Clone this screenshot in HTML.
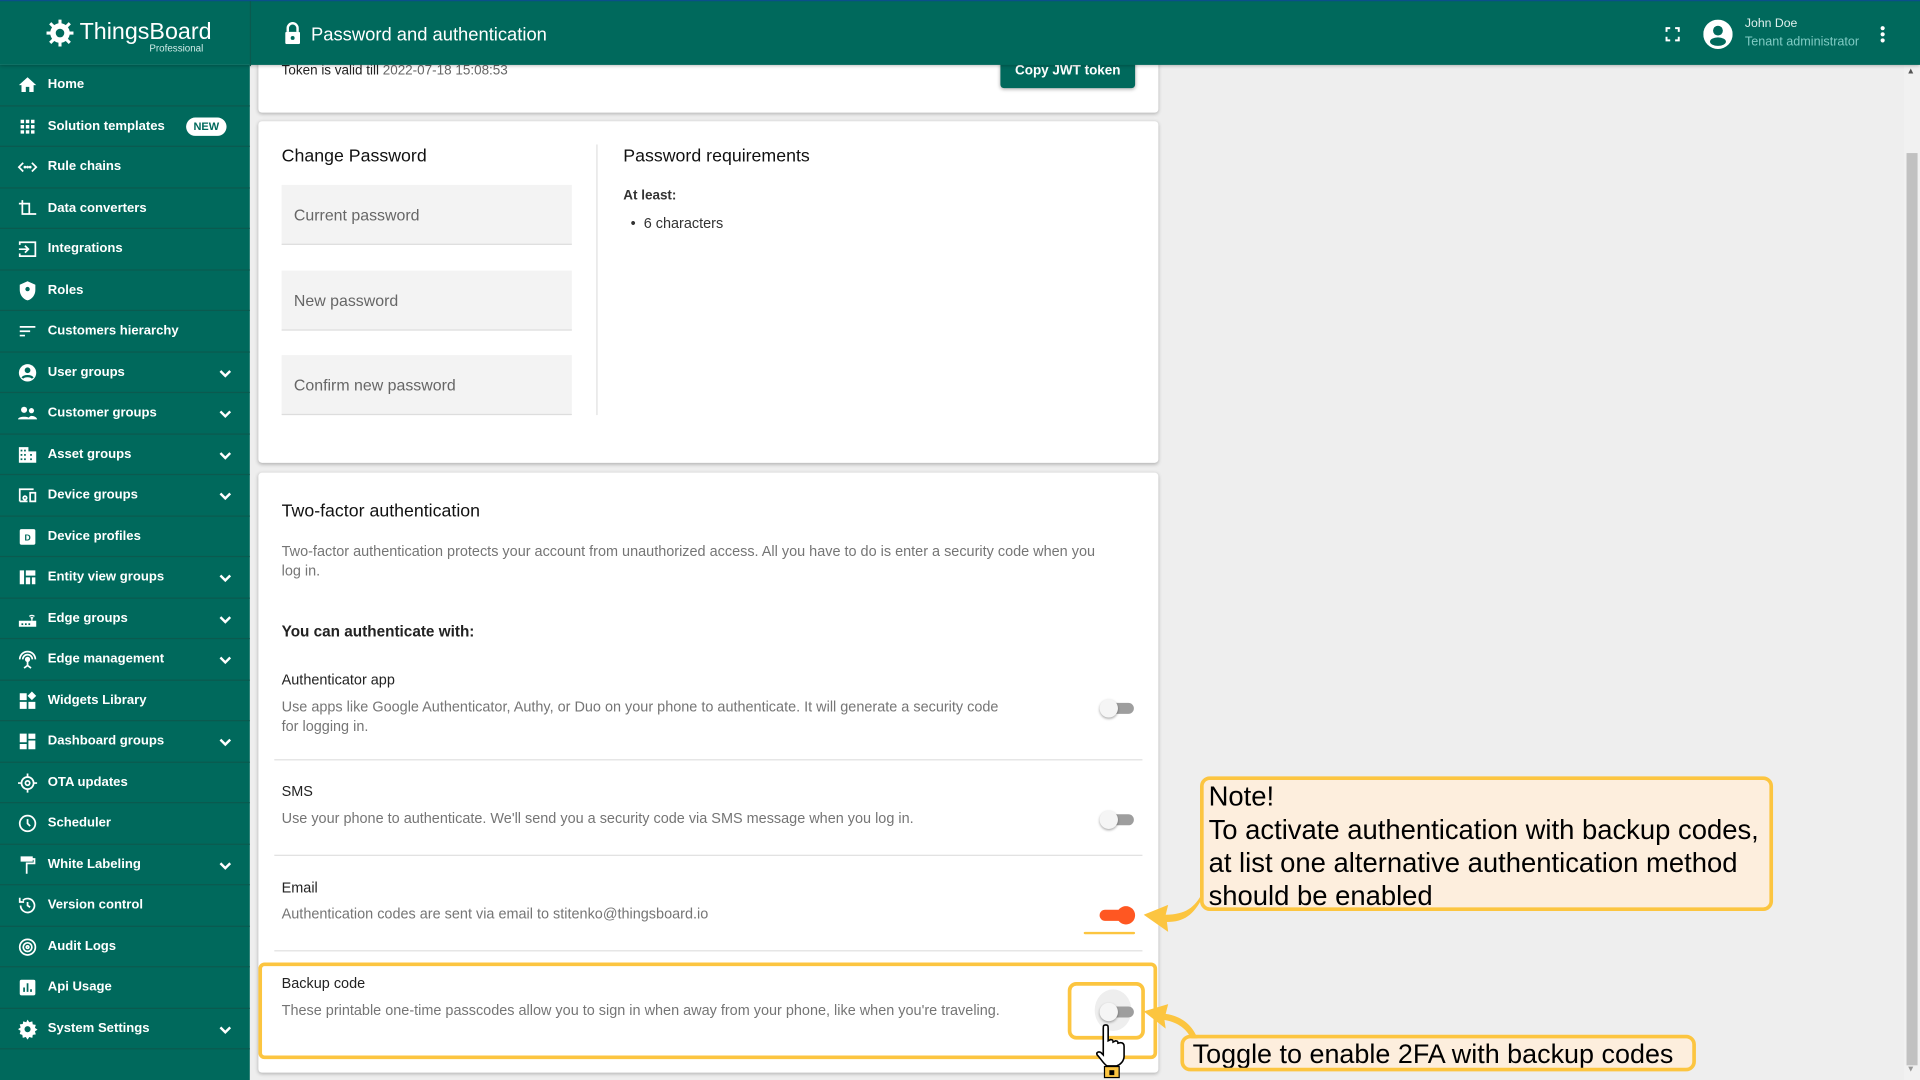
<!DOCTYPE html>
<html><head><meta charset="utf-8"><style>
*{box-sizing:border-box;margin:0;padding:0}
html,body{width:1920px;height:1080px;overflow:hidden;background:#eee;font-family:"Liberation Sans",Arial,sans-serif}
#w{position:absolute;left:0;top:0;width:1568px;height:882px;transform:scale(1.22449);transform-origin:0 0;background:#eee}
.abs{position:absolute}
#top{left:0;top:0;width:1568px;height:53px;background:#00695c;border-top:1px solid #0b4f8a;box-shadow:0 1px 3px rgba(0,0,0,.3);z-index:3}
#side{left:0;top:53px;width:204px;height:829px;background:#00695c}
.it{position:absolute;left:0;width:204px;height:33.5px;border-bottom:1px solid #0b5a4f;color:#fff;font-size:10.7px;font-weight:bold;line-height:33px;padding-left:39px}
.it svg.ic{position:absolute;left:14px;top:8px;width:17px;height:17px}
.it svg.chev{position:absolute;left:179px;top:14px;width:10px;height:7px}
.card{position:absolute;background:#fff;border-radius:3px;box-shadow:0 1px 3px rgba(0,0,0,.25)}
.fld{position:absolute;left:230px;width:237px;height:49px;background:#f3f3f3;border-bottom:1px solid #ddd;font-size:13px;color:#666;padding:17px 10px}
.t{position:absolute;white-space:nowrap}
.tg{position:absolute;width:28px;height:14px}
.tg .tr{position:absolute;left:6px;top:3px;width:22px;height:9px;border-radius:5px;background:#9e9e9e}
.tg .th{position:absolute;left:0;top:0;width:15px;height:15px;border-radius:50%;background:#f5f5f5;box-shadow:0 1px 2px rgba(0,0,0,.35)}
.note{position:absolute;background:#fdeedd;border:3px solid #fcc540;border-radius:8px;color:#000;line-height:27px;font-family:"Liberation Sans",sans-serif;white-space:nowrap;overflow:hidden}
.sep{position:absolute;left:224px;width:709px;height:1px;background:#e0e0e0}
.h{font-size:14.5px;color:#111}
.d{font-size:11.8px;color:#757575}
</style></head><body><div id="w">
<div id="top" class="abs">
 <svg class="abs" style="left:34px;top:11px" width="30" height="30" viewBox="0 0 30 30"><circle cx="15" cy="15" r="8" fill="#fff"/><g stroke="#fff" stroke-width="2.5"><line x1="15" y1="4" x2="15" y2="26"/><line x1="4" y1="15" x2="26" y2="15"/><line x1="7" y1="7" x2="23" y2="23"/><line x1="23" y1="7" x2="7" y2="23"/></g><circle cx="15" cy="15" r="3.5" fill="#00695c"/></svg>
 <div class="t" style="left:65px;top:15px;color:#fff;font-size:19px">ThingsBoard</div>
 <div class="t" style="left:122px;top:34px;color:#d0ece8;font-size:8px">Professional</div>
 <div class="abs" style="left:204px;top:0;width:1px;height:53px;background:#0b5a4f"></div>
 <svg class="abs" style="left:232px;top:17px" width="14" height="18" viewBox="0 0 14 18"><path d="M3 8V5a4 4 0 0 1 8 0v3" stroke="#fff" stroke-width="2" fill="none"/><rect x="1" y="8" width="12" height="10" rx="1" fill="#fff"/><circle cx="7" cy="13" r="1.6" fill="#00695c"/></svg>
 <div class="t" style="left:254px;top:19px;color:#fff;font-size:15px">Password and authentication</div>
 <svg class="abs" style="left:1360px;top:21px" width="12" height="12" viewBox="0 0 12 12" fill="none" stroke="#fff" stroke-width="1.6"><path d="M1 4V1h3M8 1h3v3M11 8v3H8M4 11H1V8"/></svg>
 <svg class="abs" style="left:1391px;top:15px" width="24" height="24" viewBox="0 0 24 24"><circle cx="12" cy="12" r="12" fill="#fff"/><circle cx="12" cy="9" r="4" fill="#00695c"/><ellipse cx="12" cy="18" rx="6.5" ry="3.5" fill="#00695c"/></svg>
 <div class="t" style="left:1425px;top:13px;color:#e0f0ed;font-size:10px">John Doe</div>
 <div class="t" style="left:1425px;top:28px;color:#80cbc4;font-size:10.3px">Tenant administrator</div>
 <svg class="abs" style="left:1535px;top:20px" width="5" height="14" viewBox="0 0 5 14" fill="#fff"><circle cx="2.5" cy="2" r="1.7"/><circle cx="2.5" cy="7" r="1.7"/><circle cx="2.5" cy="12" r="1.7"/></svg>
</div>
<div id="side" class="abs">
<div class="it" style="top:0"><svg class="ic" viewBox="0 0 24 24" fill="#fff"><path d="M10 20v-6h4v6h5v-8h3L12 3 2 12h3v8z"/></svg>Home</div>
<div class="it" style="top:33.5px"><svg class="ic" viewBox="0 0 24 24" fill="#fff"><path d="M4 4h4v4H4zM10 4h4v4h-4zM16 4h4v4h-4zM4 10h4v4H4zM10 10h4v4h-4zM16 10h4v4h-4zM4 16h4v4H4zM10 16h4v4h-4zM16 16h4v4h-4z"/></svg>Solution templates<span style="position:absolute;left:152px;top:9px;height:15px;line-height:15px;padding:0 6px;border-radius:8px;background:#fff;color:#00695c;font-size:9px">NEW</span></div>
<div class="it" style="top:67px"><svg class="ic" viewBox="0 0 24 24" fill="none" stroke="#fff" stroke-width="2"><path d="M7 7l-5 5 5 5M17 7l5 5-5 5"/><circle cx="9" cy="12" r=".6" fill="#fff"/><circle cx="12" cy="12" r=".6" fill="#fff"/><circle cx="15" cy="12" r=".6" fill="#fff"/></svg>Rule chains</div>
<div class="it" style="top:100.5px"><svg class="ic" viewBox="0 0 24 24" fill="none" stroke="#fff" stroke-width="2"><path d="M6 2v16h16M2 6h12v12"/></svg>Data converters</div>
<div class="it" style="top:134px"><svg class="ic" viewBox="0 0 24 24" fill="none" stroke="#fff" stroke-width="2"><path d="M3 7V4h18v16H3v-3M2 12h11M9 8l4 4-4 4"/></svg>Integrations</div>
<div class="it" style="top:167.5px"><svg class="ic" viewBox="0 0 24 24" fill="#fff"><path d="M12 1L3 5v6c0 5.5 3.8 10.7 9 12 5.2-1.3 9-6.5 9-12V5z"/><circle cx="12" cy="10" r="2.5" fill="#00695c"/></svg>Roles</div>
<div class="it" style="top:201px"><svg class="ic" viewBox="0 0 24 24" fill="#fff"><path d="M3 6h18v2H3zM3 11h12v2H3zM3 16h6v2H3z"/></svg>Customers hierarchy</div>
<div class="it" style="top:234.5px"><svg class="ic" viewBox="0 0 24 24"><circle cx="12" cy="12" r="10" fill="#fff"/><circle cx="12" cy="9" r="3.3" fill="#00695c"/><path d="M6 18c2-3 10-3 12 0" stroke="#00695c" stroke-width="2.5" fill="none"/></svg>User groups<svg class="chev" viewBox="0 0 10 7"><path d="M1 1l4 4 4-4" stroke="#fff" stroke-width="2" fill="none"/></svg></div>
<div class="it" style="top:268px"><svg class="ic" viewBox="0 0 24 24" fill="#fff"><circle cx="8" cy="8" r="3.5"/><circle cx="16.5" cy="9" r="3"/><path d="M1 19c0-4 14-4 14 0zM13 19c0-2 1-3 3-4 4 0 7 2 7 4z"/></svg>Customer groups<svg class="chev" viewBox="0 0 10 7"><path d="M1 1l4 4 4-4" stroke="#fff" stroke-width="2" fill="none"/></svg></div>
<div class="it" style="top:301.5px"><svg class="ic" viewBox="0 0 24 24" fill="#fff"><path d="M2 3h11v5h9v13H2z"/><g fill="#00695c"><rect x="4" y="6" width="2" height="2"/><rect x="8" y="6" width="2" height="2"/><rect x="4" y="11" width="2" height="2"/><rect x="8" y="11" width="2" height="2"/><rect x="4" y="16" width="2" height="2"/><rect x="8" y="16" width="2" height="2"/><rect x="15" y="11" width="2" height="2"/><rect x="15" y="16" width="2" height="2"/></g></svg>Asset groups<svg class="chev" viewBox="0 0 10 7"><path d="M1 1l4 4 4-4" stroke="#fff" stroke-width="2" fill="none"/></svg></div>
<div class="it" style="top:335px"><svg class="ic" viewBox="0 0 24 24" fill="none" stroke="#fff" stroke-width="2"><path d="M3 19V5h16M15 9h6v10h-6zM3 19h9"/><circle cx="9" cy="15" r="2"/></svg>Device groups<svg class="chev" viewBox="0 0 10 7"><path d="M1 1l4 4 4-4" stroke="#fff" stroke-width="2" fill="none"/></svg></div>
<div class="it" style="top:368.5px"><svg class="ic" viewBox="0 0 24 24"><rect x="3" y="3" width="18" height="18" rx="2" fill="#fff"/><text x="8.5" y="16" font-size="10" font-weight="bold" fill="#00695c" font-family="Liberation Sans">D</text></svg>Device profiles</div>
<div class="it" style="top:402px"><svg class="ic" viewBox="0 0 24 24" fill="#fff"><path d="M3 4h5v16H3zM10 4h11v6H10zM10 12h5v8h-5zM17 12h4v8h-4z"/></svg>Entity view groups<svg class="chev" viewBox="0 0 10 7"><path d="M1 1l4 4 4-4" stroke="#fff" stroke-width="2" fill="none"/></svg></div>
<div class="it" style="top:435.5px"><svg class="ic" viewBox="0 0 24 24" fill="#fff"><path d="M2 14h20v7H2z"/><path d="M14 9a5 5 0 0 1 6 0M15.5 11a2.5 2.5 0 0 1 3 0M17 11v3" stroke="#fff" stroke-width="1.5" fill="none"/><g fill="#00695c"><rect x="5" y="17" width="2" height="2"/><rect x="9" y="17" width="2" height="2"/><rect x="13" y="17" width="2" height="2"/></g></svg>Edge groups<svg class="chev" viewBox="0 0 10 7"><path d="M1 1l4 4 4-4" stroke="#fff" stroke-width="2" fill="none"/></svg></div>
<div class="it" style="top:469px"><svg class="ic" viewBox="0 0 24 24" fill="none" stroke="#fff" stroke-width="2"><path d="M3 12a9 9 0 0 1 18 0M6.5 12a5.5 5.5 0 0 1 11 0"/><circle cx="12" cy="12" r="2" fill="#fff"/><path d="M12 14v5M8 22l4-3 4 3"/></svg>Edge management<svg class="chev" viewBox="0 0 10 7"><path d="M1 1l4 4 4-4" stroke="#fff" stroke-width="2" fill="none"/></svg></div>
<div class="it" style="top:502.5px"><svg class="ic" viewBox="0 0 24 24" fill="#fff"><path d="M3 3h8v8H3zM3 13h8v8H3zM13 13h8v8h-8zM17 1l5 5-5 5-5-5z"/></svg>Widgets Library</div>
<div class="it" style="top:536px"><svg class="ic" viewBox="0 0 24 24" fill="#fff"><path d="M3 3h8v10H3zM3 15h8v6H3zM13 3h8v6h-8zM13 11h8v10h-8z"/></svg>Dashboard groups<svg class="chev" viewBox="0 0 10 7"><path d="M1 1l4 4 4-4" stroke="#fff" stroke-width="2" fill="none"/></svg></div>
<div class="it" style="top:569.5px"><svg class="ic" viewBox="0 0 24 24" fill="none" stroke="#fff" stroke-width="2"><circle cx="12" cy="12" r="7"/><circle cx="12" cy="12" r="2.5"/><path d="M12 1v4M12 19v4M1 12h4M19 12h4"/></svg>OTA updates</div>
<div class="it" style="top:603px"><svg class="ic" viewBox="0 0 24 24" fill="none" stroke="#fff" stroke-width="2"><circle cx="12" cy="12" r="9"/><path d="M12 7v5l3 3"/></svg>Scheduler</div>
<div class="it" style="top:636.5px"><svg class="ic" viewBox="0 0 24 24" fill="#fff"><path d="M4 2h14v6H4zM18 4h3v7h-9v3h-2v-5h9V6h-1zM10 14h2v8h-2z"/></svg>White Labeling<svg class="chev" viewBox="0 0 10 7"><path d="M1 1l4 4 4-4" stroke="#fff" stroke-width="2" fill="none"/></svg></div>
<div class="it" style="top:670px"><svg class="ic" viewBox="0 0 24 24" fill="none" stroke="#fff" stroke-width="2"><path d="M4 12a8 8 0 1 0 2.5-5.8M3 3v5h5M12 8v4l3 2"/></svg>Version control</div>
<div class="it" style="top:703.5px"><svg class="ic" viewBox="0 0 24 24" fill="none" stroke="#fff" stroke-width="2"><circle cx="12" cy="12" r="9"/><circle cx="12" cy="12" r="5"/><circle cx="12" cy="12" r="1.5"/></svg>Audit Logs</div>
<div class="it" style="top:737px"><svg class="ic" viewBox="0 0 24 24"><rect x="3" y="3" width="18" height="18" rx="2" fill="#fff"/><path d="M8 17v-5M12 17V7M16 17v-3" stroke="#00695c" stroke-width="2"/></svg>Api Usage</div>
<div class="it" style="top:770.5px"><svg class="ic" viewBox="0 0 24 24" fill="#fff"><path d="M12 1l2 3 3.5-1 .5 3.5 3.5.5-1 3.5 3 2-3 2 1 3.5-3.5.5-.5 3.5-3.5-1-2 3-2-3-3.5 1-.5-3.5L3 17.5l1-3.5-3-2 3-2-1-3.5 3.5-.5L7 3l3.5 1z"/><circle cx="12" cy="12" r="3.5" fill="#00695c"/></svg>System Settings<svg class="chev" viewBox="0 0 10 7"><path d="M1 1l4 4 4-4" stroke="#fff" stroke-width="2" fill="none"/></svg></div>
</div>

<div class="abs" style="left:1555px;top:53px;width:13px;height:829px;background:#f1f1f1"></div>
<div class="abs" style="left:1557px;top:125px;width:9px;height:745px;background:#c1c1c1"></div>
<div class="t" style="left:1557px;top:55px;font-size:7px;color:#555">▲</div>
<div class="t" style="left:1557px;top:870px;font-size:7px;color:#999">▼</div>

<div class="card" style="left:211px;top:44px;width:735px;height:48px"></div>
<div class="t" style="left:230px;top:52px;font-size:11px;color:#222">Token is valid till <span style="color:#666">2022-07-18 15:08:53</span></div>
<div class="abs" style="left:817px;top:44px;width:110px;height:28px;background:#00695c;border-radius:3px;color:#fff;font-size:11px;font-weight:bold;text-align:center;line-height:28px;box-shadow:0 1px 3px rgba(0,0,0,.3)">Copy JWT token</div>
<div class="abs" style="left:204px;top:53px;width:1351px;height:0;box-shadow:0 0 3px rgba(0,0,0,.4);z-index:2"></div>

<div class="card" style="left:211px;top:99px;width:735px;height:279px"></div>
<div class="t h" style="left:230px;top:120px">Change Password</div>
<div class="fld" style="top:151px">Current password</div>
<div class="fld" style="top:221px">New password</div>
<div class="fld" style="top:290px">Confirm new password</div>
<div class="abs" style="left:487px;top:118px;width:1px;height:221px;background:#e0e0e0"></div>
<div class="t h" style="left:509px;top:120px">Password requirements</div>
<div class="t" style="left:509px;top:154px;font-size:11px;font-weight:bold;color:#333">At least:</div>
<div class="t" style="left:515px;top:175px;font-size:11.8px;color:#333">•&nbsp;&nbsp;6 characters</div>

<div class="card" style="left:211px;top:386px;width:735px;height:490px"></div>
<div class="t h" style="left:230px;top:410px">Two-factor authentication</div>
<div class="t d" style="left:230px;top:442px;line-height:16px">Two-factor authentication protects your account from unauthorized access. All you have to do is enter a security code when you<br>log in.</div>
<div class="t" style="left:230px;top:509px;font-size:12.5px;font-weight:bold;color:#222">You can authenticate with:</div>

<div class="t" style="left:230px;top:548px;font-size:11.8px;color:#222">Authenticator app</div>
<div class="t d" style="left:230px;top:569px;line-height:16px">Use apps like Google Authenticator, Authy, or Duo on your phone to authenticate. It will generate a security code<br>for logging in.</div>
<div class="tg" style="left:898px;top:571px"><div class="tr"></div><div class="th"></div></div>
<div class="sep" style="top:620px"></div>

<div class="t" style="left:230px;top:639px;font-size:11.8px;color:#222">SMS</div>
<div class="t d" style="left:230px;top:661px">Use your phone to authenticate. We'll send you a security code via SMS message when you log in.</div>
<div class="tg" style="left:898px;top:662px"><div class="tr"></div><div class="th"></div></div>
<div class="sep" style="top:698px"></div>

<div class="t" style="left:230px;top:718px;font-size:11.8px;color:#222">Email</div>
<div class="t d" style="left:230px;top:739px">Authentication codes are sent via email to stitenko@thingsboard.io</div>
<div class="abs" style="left:898px;top:743px;width:22px;height:9px;border-radius:5px;background:#ff5722"></div>
<div class="abs" style="left:912px;top:740px;width:15px;height:15px;border-radius:50%;background:#ff5722"></div>
<div class="abs" style="left:885px;top:761px;width:42px;height:2px;background:#fcc540;border-radius:2px"></div>
<div class="sep" style="top:776px"></div>

<div class="abs" style="left:211px;top:786px;width:734px;height:79px;border:3px solid #fcc540;border-radius:5px"></div>
<div class="t" style="left:230px;top:796px;font-size:11.8px;color:#222">Backup code</div>
<div class="t d" style="left:230px;top:818px">These printable one-time passcodes allow you to sign in when away from your phone, like when you're traveling.</div>
<div class="abs" style="left:872px;top:802px;width:63px;height:47px;border:3px solid #fcc540;border-radius:7px"></div>
<div class="abs" style="left:894px;top:808px;width:30px;height:34px;border-radius:50%;background:#eee"></div>
<div class="tg" style="left:898px;top:819px"><div class="tr"></div><div class="th"></div></div>
<svg class="abs" style="left:894px;top:835px" width="28" height="46" viewBox="0 0 28 46"><path d="M9 2c2 0 2 1 2 3v10l2-1c2 0 2 1 2 2l2-1c2 0 2 1 2 2l2-.5c2 0 3 1 3 3v8c0 4-3 7-6 8H10c-3-2-5-6-8-9-1-2 1-3 3-2l2 2V5c0-2 0-3 2-3z" fill="#fff" stroke="#000" stroke-width="1.3"/><rect x="8" y="36" width="12" height="9" fill="#fcc540" stroke="#000"/><rect x="12" y="39" width="4" height="4" fill="#000"/></svg>

<div class="note" style="left:980px;top:634px;width:468px;height:110px;padding:0 4px;font-size:22.4px">Note!<br>To activate authentication with backup codes,<br>at list one alternative authentication method<br>should be enabled</div>
<div class="note" style="left:964px;top:845px;width:421px;height:30px;padding:0 7px;font-size:22px;line-height:25px">Toggle to enable 2FA with backup codes</div>
<svg class="abs" style="left:930px;top:725px" width="55" height="40" viewBox="0 0 55 40"><path d="M52 4C46 16 38 22 22 22l2-8L4 22l20 14 -1-8c14 0 22-6 29-20z" fill="#fcc540"/></svg>
<svg class="abs" style="left:926px;top:810px" width="60" height="40" viewBox="0 0 60 40"><path d="M52 38C48 28 40 20 26 18l2-8L8 16l18 14-1-7c12 2 18 8 22 15z" fill="#fcc540"/></svg>
</div></body></html>
